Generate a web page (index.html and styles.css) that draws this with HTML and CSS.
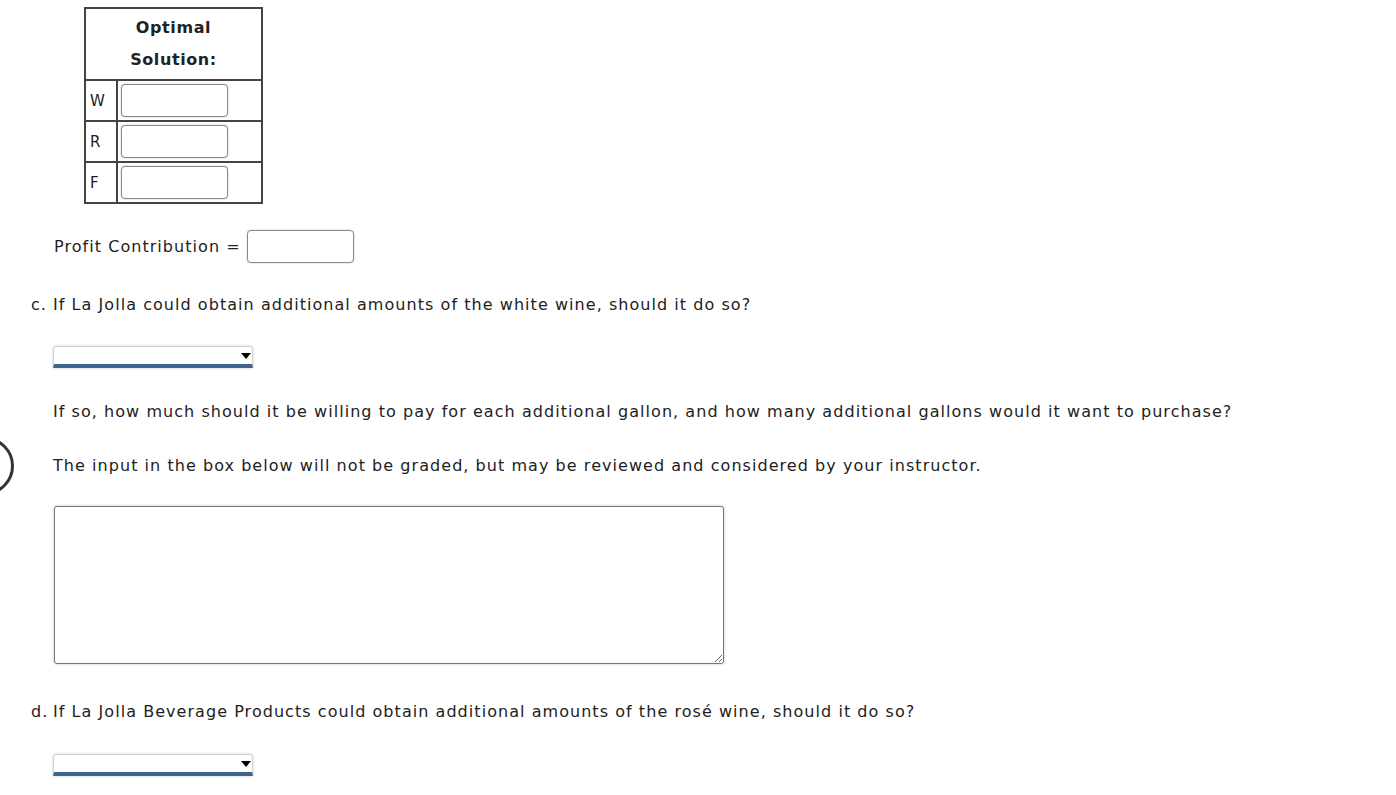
FILE: index.html
```html
<!DOCTYPE html>
<html>
<head>
<meta charset="utf-8">
<link rel="stylesheet" href="styles.css">
</head>
<body>
<div class="page">
  <div class="ring"></div>
  <table class="sol">
    <tr><th colspan="2" class="head"><span class="head-t">Optimal Solution:</span></th></tr>
    <tr><td class="lab">W</td><td class="cell"><input class="box" type="text"></td></tr>
    <tr><td class="lab">R</td><td class="cell"><input class="box" type="text"></td></tr>
    <tr><td class="lab">F</td><td class="cell"><input class="box" type="text"></td></tr>
  </table>

  <div class="profit">
    <span class="plabel">Profit Contribution</span>
    <span class="eq">=</span>
    <input class="box" type="text">
  </div>

  <div class="q q-c"><span class="mark">c.</span><span>If La Jolla could obtain additional amounts of the white wine, should it do so?</span></div>

  <div class="sel sel-1"><select class="dd"><option></option></select></div>

  <p class="txt t1">If so, how much should it be willing to pay for each additional gallon, and how many additional gallons would it want to purchase?</p>
  <p class="txt t2">The input in the box below will not be graded, but may be reviewed and considered by your instructor.</p>

  <textarea class="essay"></textarea>

  <div class="q q-d"><span class="mark">d.</span><span>If La Jolla Beverage Products could obtain additional amounts of the rosé wine, should it do so?</span></div>

  <div class="sel sel-2"><select class="dd"><option></option></select></div>
</div>
</body>
</html>
```

FILE: styles.css
```css
html, body {
  margin: 0;
  padding: 0;
  background: #fff;
}
body {
  font-family: "DejaVu Sans", Verdana, sans-serif;
  font-size: 16px;
  letter-spacing: 1.05px;
  color: #222;
  overflow: hidden;
}
.page {
  position: relative;
  height: 795px;
  padding-top: 7px;
  box-sizing: border-box;
}
.ring {
  position: absolute;
  left: -44px;
  top: 437px;
  width: 52px;
  height: 52px;
  border: 3px solid #333;
  border-radius: 50%;
}
.sol {
  margin-left: 84px;
  width: 179px;
  border-collapse: collapse;
  border: 2px solid #444;
}
.sol td, .sol th {
  border: 2px solid #444;
  padding: 0;
}
.head {
  font-size: 16px;
  font-weight: bold;
  letter-spacing: 0.6px;
  line-height: 32px;
  height: 72px;
  padding: 2px 0;
  text-align: center;
  box-sizing: border-box;
}
.head-t {
  display: inline-block;
  width: 110px;
}
.lab {
  width: 32px;
  height: 41px;
  font-size: 15px;
  letter-spacing: 0;
  padding-left: 4px !important;
  vertical-align: middle;
  box-sizing: border-box;
}
.cell {
  height: 41px;
  box-sizing: border-box;
  padding: 0 0 0 3px !important;
  vertical-align: middle;
}
.box {
  display: block;
  width: 107px;
  height: 33px;
  box-sizing: border-box;
  border: 1px solid #8a8a8a;
  border-radius: 4px;
  box-shadow: 0 0 2px rgba(0,0,0,0.25);
  background: #fff;
  padding: 0;
  margin: 0;
}
.profit {
  display: flex;
  align-items: center;
  margin-left: 54px;
  margin-top: 26px;
}
.plabel {
  line-height: 20px;
}
.eq {
  margin-left: 6px;
  margin-right: 6px;
  line-height: 20px;
}
.q {
  display: flex;
  margin-left: 31px;
  line-height: 20px;
}
.mark {
  width: 22px;
  flex: none;
}
.q-c { margin-top: 32px; }
.q-d { margin-top: 38px; }
.sel {
  position: relative;
  margin-left: 53px;
  width: 200px;
  height: 22px;
}
.sel-1 { margin-top: 31px; }
.sel-2 { margin-top: 32px; }
.sel::after {
  content: "";
  position: absolute;
  right: 2px;
  top: 7px;
  border-left: 5px solid transparent;
  border-right: 5px solid transparent;
  border-top: 6px solid #000;
  pointer-events: none;
}
.dd {
  -webkit-appearance: none;
  appearance: none;
  display: block;
  width: 200px;
  height: 22px;
  margin: 0;
  box-sizing: border-box;
  border: 1px solid #d4d4d4;
  border-bottom: 4px solid #3e6590;
  border-radius: 4px 4px 0 0;
  box-shadow: 0 0 3px rgba(0,0,0,0.2);
  background: #fff;
}
.txt {
  margin: 0 0 0 53px;
  line-height: 20px;
}
.t1 { margin-top: 34px; }
.t2 { margin-top: 34px; }
.essay {
  display: block;
  margin: 30px 0 0 54px;
  width: 670px;
  height: 158px;
  box-sizing: border-box;
  border: 1px solid #767676;
  border-radius: 3px;
  box-shadow: 0 0 3px rgba(0,0,0,0.25);
  resize: both;
  padding: 2px;
  font-family: inherit;
}
```
